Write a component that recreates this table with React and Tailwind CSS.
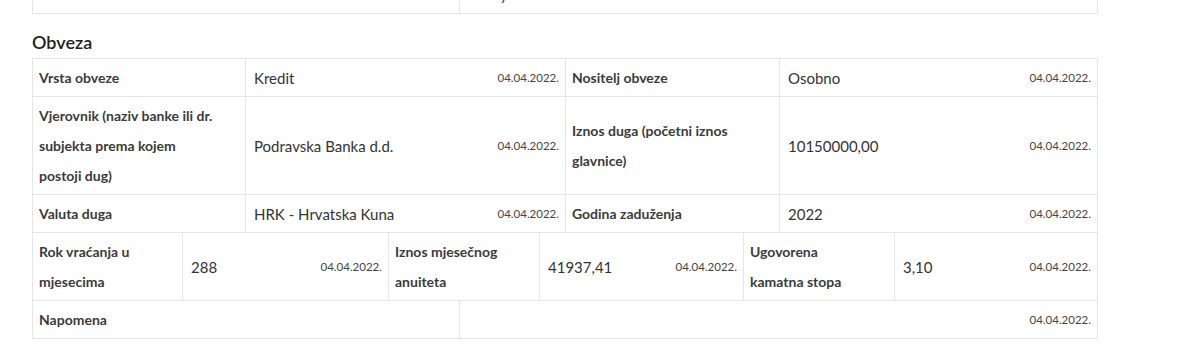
import React from 'react';

const date = '04.04.2022.';

const Label = ({ children }) => (
  <div className="border-r border-b border-[#e5e5e5] px-1.5 py-[3.5px] text-[14px] font-bold leading-[30px] text-[#3b3b3b] flex items-center">
    <span>{children}</span>
  </div>
);

const Value = ({ value }) => (
  <div className="border-r border-b border-[#e5e5e5] pl-2 pr-1.5 py-[3.5px] flex items-center justify-between leading-[30px]">
    <span className="text-[15px] text-[#333]">{value}</span>
    <span className="text-[11.5px] text-[#444]">{date}</span>
  </div>
);

const App = () => {
  return (
    <div className="w-[1200px] h-[355px] bg-white overflow-hidden" style={{ fontFamily: 'Lato, "Open Sans", sans-serif' }}>
      {/* tail of the previous section */}
      <div className="ml-8 w-[1066px] h-[14px] grid grid-cols-[427px_1fr] border-l border-b border-[#e5e5e5]">
        <div className="border-r border-[#e5e5e5]" />
        <div className="border-r border-[#e5e5e5] overflow-hidden pl-10">
          <div className="-mt-[19px] text-[14px] leading-[30px] text-[#333]">y</div>
        </div>
      </div>

      <h2 className="ml-8 mt-[17px] mb-1 text-[18px] leading-[23px] font-semibold text-[#222]">Obveza</h2>

      <div className="ml-8 w-[1066px] border-l border-t border-[#e5e5e5]">
        <div className="grid grid-cols-[213px_320px_214px_1fr]">
          <Label>Vrsta obveze</Label>
          <Value value="Kredit" />
          <Label>Nositelj obveze</Label>
          <Value value="Osobno" />

          <Label>
            Vjerovnik (naziv banke ili dr.<br />subjekta prema kojem<br />postoji dug)
          </Label>
          <Value value="Podravska Banka d.d." />
          <Label>
            Iznos duga (početni iznos<br />glavnice)
          </Label>
          <Value value="10150000,00" />

          <Label>Valuta duga</Label>
          <Value value="HRK - Hrvatska Kuna" />
          <Label>Godina zaduženja</Label>
          <Value value="2022" />
        </div>

        <div className="grid grid-cols-[150px_206px_151px_204px_151px_1fr]">
          <Label>
            Rok vraćanja u<br />mjesecima
          </Label>
          <Value value="288" />
          <Label>
            Iznos mjesečnog<br />anuiteta
          </Label>
          <Value value="41937,41" />
          <Label>
            Ugovorena<br />kamatna stopa
          </Label>
          <Value value="3,10" />
        </div>

        <div className="grid grid-cols-[427px_1fr]">
          <Label>Napomena</Label>
          <Value value="" />
        </div>
      </div>
    </div>
  );
};

export default App;
